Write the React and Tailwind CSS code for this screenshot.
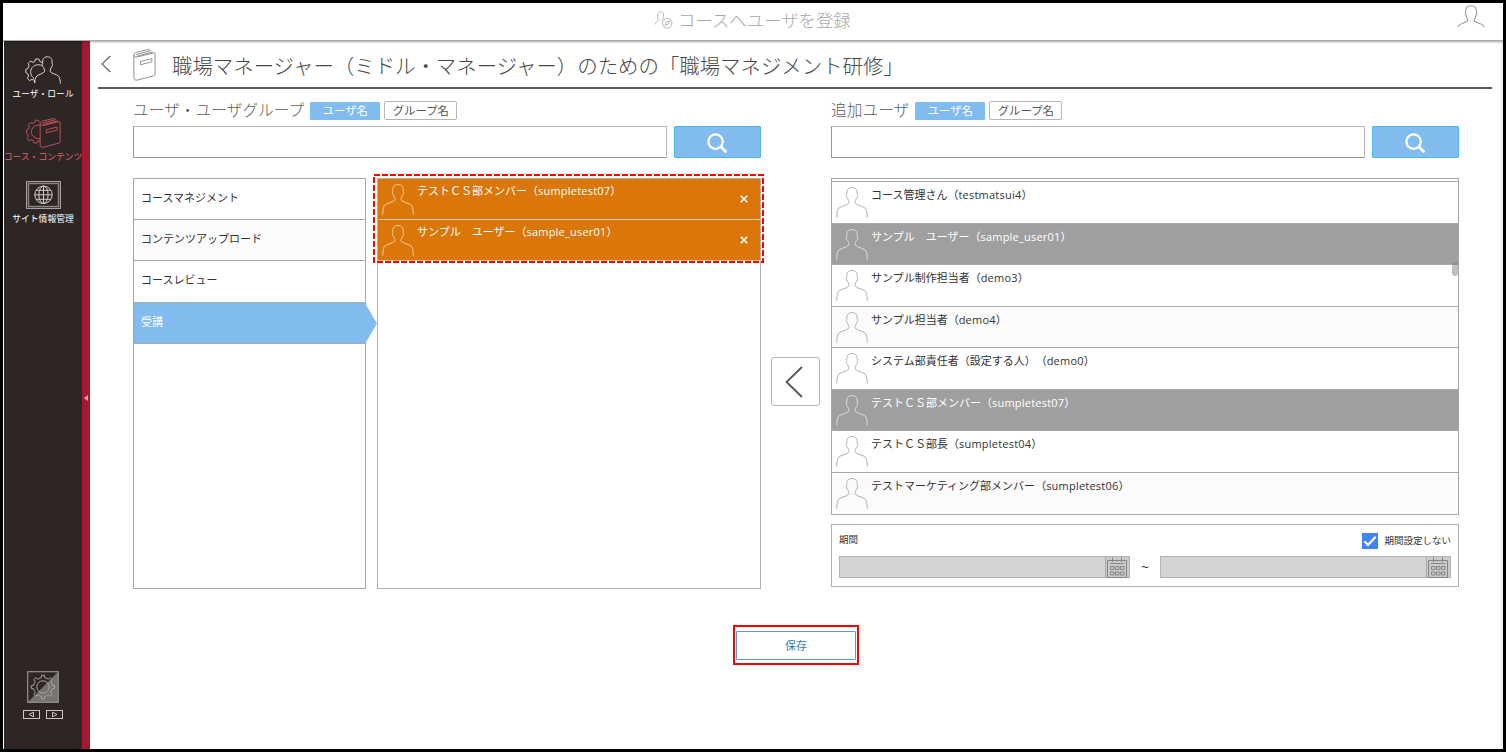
import React from "react";

const gearPath = (cx, cy, r, teeth) => {
  const step = (Math.PI * 2) / teeth;
  const p = (a, rad) => `${(cx + Math.cos(a) * rad).toFixed(2)} ${(cy + Math.sin(a) * rad).toFixed(2)}`;
  const inner = r * 0.8;
  let d = "";
  for (let i = 0; i < teeth; i++) {
    const a = i * step - Math.PI / 2;
    d += `${i ? "L" : "M"}${p(a - step * 0.24, inner)}L${p(a - step * 0.15, r)}L${p(a + step * 0.15, r)}L${p(a + step * 0.24, inner)}`;
    d += `A${inner} ${inner} 0 0 1 ${p(a + step * 0.76, inner)}`;
  }
  return d + "Z";
};

const Person = ({ className }) => (
  <svg viewBox="0 0 32 31" className={className} fill="none" stroke="currentColor" strokeWidth="1">
    <path d="M.7 30.6C.8 27 1.2 23.5 2.2 21.6C3.8 19.6 10.2 18.6 12.6 16.4C13.6 15 12.6 14.2 11.8 11.6C10.4 11 9.9 8.6 10.8 7.6C10.3 2.6 12.3.6 16 .6S21.7 2.6 21.2 7.6C22.1 8.6 21.6 11 20.2 11.6C19.4 14.2 18.4 15 19.4 16.4C21.8 18.6 28.2 19.6 29.8 21.6C30.8 23.5 31.2 27 31.3 30.6" />
  </svg>
);

const bookPaths = (
  <>
    <path d="M.8 7.2C.8 5.4 1.6 4.7 3.2 4.3L16 1.2" />
    <path d="M2.8 6.4L17.6 2.6M3.6 8L19.2 4" />
    <path d="M.8 7C1 8.6 2.4 9.2 4 8.8L20.6 4.8C21.2 4.7 21.6 5 21.6 5.6V25.6C21.6 26.4 21.2 27 20.4 27.2L4.2 31.5C2.2 31.8.8 31 .8 29.4Z" />
    <path d="M7.2 13.3L18.4 10.4V13.6L7.2 16.5Z" />
  </>
);

const BookIcon = () => (
  <svg viewBox="0 0 22.4 32.4" className="h-[33px] w-[23px]" fill="none" stroke="#888" strokeWidth="0.9">
    {bookPaths}
  </svg>
);

const RoleIcon = () => (
  <svg viewBox="0 0 36 28" className="h-7 w-9" fill="none" stroke="#d8d5d4" strokeWidth="1">
    <path d="M10 26.8L9.8 24.6L7 23.4L4.5 24.6L2.4 22.4L3.6 20L2.7 17.6L.8 16.6V13.4L3 12.4L4 9.8L3.2 7.4L5.4 5.2L7.9 6.3L9.8 5.4L10.6 3H13.8L14.8 5.4L17.4 6.6" />
    <path d="M9 22.4C5.8 20 4.8 16 6.4 12.8C8.2 9.2 13 7.6 17.2 9.6" />
    <path d="M9.4 27C9.6 24 10.4 21.4 12 20C14.4 18.2 17.6 17.8 19.4 15.8C20.2 14.6 19.2 14 18.6 11.4C17.2 10.8 16.8 8.6 17.7 7.6C17.2 2.8 19 .8 22.4.8S27.6 2.8 27.1 7.6C28 8.6 27.6 10.8 26.2 11.4C25.6 14 24.6 14.6 25.4 15.8C27.2 18 31.4 18 33.4 20C34.8 21.6 35.2 24.6 35.4 27.6" />
  </svg>
);

const CourseIcon = () => (
  <svg viewBox="0 0 35 32" className="h-8 w-[35px]" fill="none" stroke="#c4505a" strokeWidth="1">
    <path d="M14.5 24.2L12 23.8L11 26H8.2L7.2 23.6L5 22.6L3 23.8L1.2 21.6L2.4 19.4L1.8 17.2L.6 16.2V13L2.6 12L3.4 9.8L2.4 7.6L4.4 5.6L6.6 6.6L8.6 5.6L9.4 3.2H12.4L13.4 5.2" />
    <path d="M14 8.2C9 7.6 5.2 10.8 5.4 15.2C5.6 19.4 9.4 22.2 14 21.4" />
    <g transform="translate(13.4 0) scale(.96)">{bookPaths}</g>
  </svg>
);

const SiteIcon = () => (
  <svg viewBox="0 0 35 28" className="h-7 w-[35px]" fill="none" stroke="#cfcccb" strokeWidth="1">
    <rect x=".6" y=".6" width="33.8" height="26.8" stroke="#b5b1b0" />
    <rect x="2.5" y="2.5" width="30" height="23" stroke="#8a8685" strokeWidth="1.4" />
    <circle cx="17.5" cy="13.8" r="8.7" />
    <ellipse cx="17.5" cy="13.8" rx="4.6" ry="8.7" />
    <path d="M17.5 5V22.5M8.8 13.8H26.2M10 9.3H25M10 18.3H25" />
  </svg>
);

const SettingsIcon = () => (
  <svg viewBox="0 0 32 32" className="h-8 w-8" fill="none">
    <path d="M31 1V31H1Z" fill="#767271" />
    <rect x=".7" y=".7" width="30.6" height="30.6" stroke="#96928f" strokeWidth="1.2" />
    <path d={gearPath(16, 16, 11.8, 8)} stroke="#aaa6a4" strokeLinejoin="round" />
    <circle cx="16" cy="16" r="6.2" stroke="#aaa6a4" />
  </svg>
);

const ArrowBox = ({ flip }) => (
  <svg viewBox="0 0 17 9" className="h-[9px] w-[17px]" fill="none" stroke="#c9c6c4">
    <rect x=".5" y=".5" width="16" height="8" />
    <path d={flip ? "M6.5 2.2V6.8L11 4.5Z" : "M10.5 2.2V6.8L6 4.5Z"} />
  </svg>
);

const CalendarIcon = () => (
  <svg viewBox="0 0 22 21" className="h-[21px] w-[22px]" fill="none" stroke="#858585">
    <path d="M1.5 3.5H20.5V20.5H1.5ZM6.5.5V5M15.5.5V5M4 6.5H18" />
    <path d="M4.5 9.5H8V12.5H4.5ZM9.5 9.5H13V12.5H9.5ZM14.5 9.5H18V12.5H14.5ZM4.5 15H8V18H4.5ZM9.5 15H13V18H9.5ZM14.5 15H18V18H14.5Z" />
  </svg>
);

const NavItem = ({ icon, label, className }) => (
  <div className={"flex w-[78px] flex-col items-center whitespace-nowrap " + className}>
    {icon}
    <span className="text-[8.8px] leading-3">{label}</span>
  </div>
);

const SectionHead = ({ title }) => (
  <div className="flex h-[19px] items-center whitespace-nowrap">
    <h2 className="mr-[6px] text-[15.72px] leading-[19px] font-light text-[#5c5c5c]">{title}</h2>
    <button className="mr-1 h-[18px] w-[70px] rounded-[1px] bg-[#82bcef] text-[11.4px] leading-[18px] text-white">ユーザ名</button>
    <button className="h-[19px] w-[73px] rounded-[2px] border border-[#b5b5b5] text-[11.4px] leading-[17px] text-[#555]">グループ名</button>
  </div>
);

const SearchBar = () => (
  <div className="mt-[6px] flex h-8 gap-[7px]">
    <div className="w-[534px] border border-[#b8b8b8] border-b-[#999] border-l-[#999] bg-white" />
    <button className="flex w-[87px] items-center justify-center rounded-[1px] border border-[#4db8ec] bg-[#82bcef]">
      <svg viewBox="0 0 20 20" className="mt-px mr-[2px] h-5 w-5" fill="none" stroke="#fff" strokeWidth="2.3" strokeLinecap="round">
        <circle cx="8.6" cy="8.6" r="7.2" />
        <path d="M13.8 13.8L18.6 18.4" strokeWidth="2.8" />
      </svg>
    </button>
  </div>
);

const Name = ({ name, id }) => (
  <div className="text-[11px] leading-[18px] whitespace-pre [text-spacing-trim:space-all]">
    {name}（<span className="tracking-[0.22px]">{id}</span>）
  </div>
);

const categories = ["コースマネジメント", "コンテンツアップロード", "コースレビュー", "受講"];
const selected = [
  ["テストＣＳ部メンバー", "sumpletest07"],
  ["サンプル　ユーザー", "sample_user01"],
];
const users = [
  ["コース管理さん", "testmatsui4"],
  ["サンプル　ユーザー", "sample_user01", true],
  ["サンプル制作担当者", "demo3"],
  ["サンプル担当者", "demo4"],
  ["システム部責任者（設定する人）", "demo0"],
  ["テストＣＳ部メンバー", "sumpletest07", true],
  ["テストＣＳ部長", "sumpletest04"],
  ["テストマーケティング部メンバー", "sumpletest06"],
];

const DateField = () => (
  <div className="flex h-[22px] w-[291px] justify-end border border-[#b4b4b4] bg-[#d3d3d3]">
    <div className="border-l border-[#aaa] bg-[#cacaca] pr-px">
      <CalendarIcon />
    </div>
  </div>
);

export default function App() {
  return (
    <div className="flex h-[752px] w-[1506px] flex-col overflow-hidden border-[3px] border-black bg-white font-['Open_Sans','Noto_Sans_CJK_JP',sans-serif] text-[#333]">
      <header className="relative z-10 flex h-[38px] shrink-0 border-b border-[#aaa] pt-[4px] shadow-[0_1px_2px_rgba(0,0,0,0.35)]">
        <div className="ml-[651px] flex h-[26px] w-[803px] items-center text-[#a8a8a8]">
          <svg viewBox="0 0 19 18" className="mr-[5px] h-[18px] w-[19px]" fill="none" stroke="#b8b8b8" strokeWidth="1">
            <path d="M.8 13.5C1.2 10.5 4.8 10.6 5 8.6C3.6 7 3.6 5.8 3.7 4C3.8 1.8 5 .8 6.6.8S9.4 1.8 9.5 4C9.6 5.8 9.6 7 8.2 8.6L9 9.6" />
            <circle cx="13.2" cy="12.2" r="4.8" />
            <path d="M11 14.4L12 11.6L15.8 9.8L14.2 13.2Z" />
          </svg>
          <h1 className="text-[17.4px] font-light whitespace-nowrap">コースへユーザを登録</h1>
        </div>
        <svg viewBox="0 0 28 23" className="mt-[-2px] h-[23px] w-7" fill="none" stroke="#999" strokeWidth="1.1">
          <path d="M1 22C2 17.4 10 18.6 11 15.2C9.8 13.2 9.4 12 9 10.4C8.2 9.8 8 8.2 8.6 7.4C8.4 2.8 10 .8 14 .8S19.6 2.8 19.4 7.4C20 8.2 19.8 9.8 19 10.4C18.6 12 18.2 13.2 17 15.2C18 18.6 26 17.4 27 22" />
        </svg>
      </header>

      <div className="flex min-h-0 flex-1">
        <nav className="ml-px flex w-[86px] shrink-0 bg-[#2e2625]">
          <div className="flex w-[78px] flex-col items-center">
            <NavItem icon={<RoleIcon />} label="ユーザ・ロール" className="mt-[15px] gap-[4px] text-white" />
            <NavItem icon={<CourseIcon />} label="コース・コンテンツ" className="mt-[17px] gap-[2px] text-[#e0606c]" />
            <NavItem icon={<SiteIcon />} label="サイト情報管理" className="mt-[18px] gap-[4px] text-white" />
            <div className="mt-auto mb-[30px] flex flex-col items-center gap-[7px]">
              <SettingsIcon />
              <div className="flex gap-[6px]">
                <ArrowBox />
                <ArrowBox flip />
              </div>
            </div>
          </div>
          <div className="flex w-2 items-center justify-center bg-[#a21a2f] pt-[6px]">
            <svg viewBox="0 0 4 6" className="h-[6px] w-1" fill="#e6a5ae"><path d="M4 0V6L0 3Z" /></svg>
          </div>
        </nav>

        <main className="flex flex-1 flex-col">
          <div className="mr-[9px] ml-2 flex h-[48px] shrink-0 items-center border-b-2 border-[#5a5a5a] whitespace-nowrap">
            <svg viewBox="0 0 10 18" className="ml-[3px] h-[18px] w-[10px]" fill="none" stroke="#666" strokeWidth="1.2">
              <path d="M9.3 1L1 9L9.3 17" />
            </svg>
            <div className="ml-[22px]"><BookIcon /></div>
            <div className="mt-[3px] ml-[16px] text-[20.42px] leading-6 font-light text-[#484848]">
              職場マネージャー（ミドル・マネージャー）のための「職場マネジメント研修」
            </div>
          </div>

          <div className="mt-[12px] ml-[43px] flex">
            <section className="w-[628px]">
              <SectionHead title="ユーザ・ユーザグループ" />
              <SearchBar />
              <div className="mt-[20px] flex h-[411px] gap-[11px]">
                <ul className="w-[233px] border border-[#a8a8a8]">
                  {categories.map((c, i) => (
                    <li
                      key={c}
                      className={
                        "relative border-b border-[#aaa] pl-[7px] text-[11px] leading-[38px] " +
                        (i === 0 ? "h-[40.5px] bg-white" : i === 3 ? "h-[41.5px] bg-[#82bcef] text-white" : i === 1 ? "h-[41.5px] bg-[#fbfbfb]" : "h-[41.5px] bg-white")
                      }
                    >
                      {c}
                      {i === 3 && (
                        <svg viewBox="0 0 12 41" className="absolute top-0 left-full h-[41px] w-3" fill="#82bcef">
                          <path d="M0 0L12 20.5L0 41Z" />
                        </svg>
                      )}
                    </li>
                  ))}
                </ul>
                <div className="relative w-[384px] border border-[#b0b0b0]">
                  {selected.map(([n, id], i) => (
                    <div
                      key={id}
                      className={"flex border-b border-[#e8c9a0] bg-[#da7708] text-white " + (i ? "h-[41.5px]" : "h-[40.5px]")}
                    >
                      <Person className={"ml-1 h-[31px] w-8 text-[#f3cf9f] " + (i ? "mt-[5px]" : "mt-[5px]")} />
                      <div className="mt-[3px] ml-[3px] flex-1"><Name name={n} id={id} /></div>
                      <svg viewBox="0 0 8 8" className="mt-[16px] mr-[12px] h-2 w-2" stroke="#fff" strokeWidth="1.6">
                        <path d="M.7.7L7.3 7.3M7.3.7L.7 7.3" />
                      </svg>
                    </div>
                  ))}
                  <svg className="absolute top-[-5px] left-[-5px] h-[90px] w-[392px]" fill="none" stroke="#f00" strokeWidth="2">
                    <rect x="1" y="1" width="389" height="87" strokeDasharray="6 2" />
                  </svg>
                </div>
              </div>
            </section>

            <div className="flex w-[70px] items-start justify-center pt-[256px]">
              <button className="mr-[2px] flex h-[49px] w-[49px] items-center justify-center rounded-[3px] border border-[#b5b5b5]">
                <svg viewBox="0 0 18 32" className="mr-[2px] h-8 w-[18px]" fill="none" stroke="#555" strokeWidth="1.8">
                  <path d="M17 1L1.5 16L17 31" />
                </svg>
              </button>
            </div>

            <section className="w-[628px]">
              <SectionHead title="追加ユーザ" />
              <SearchBar />
              <div className="relative mt-[20px] h-[337px] border border-[#a8a8a8] pt-[2px]">
                {users.map(([n, id, on], i) => (
                  <div
                    key={n}
                    className={
                      "flex h-[41.5px] border-t border-[#aaa] " +
                      (on ? "bg-[#9f9f9f] text-white" : i % 2 ? "bg-[#fbfbfb]" : "bg-white")
                    }
                  >
                    <Person className={"mt-[5px] ml-1 h-[31px] w-8 " + (on ? "text-[#dedede]" : "text-[#b0b0b0]")} />
                    <div className="mt-[4px] ml-[3px]"><Name name={n} id={id} /></div>
                  </div>
                ))}
                <div className="absolute top-[83px] right-0 h-[14px] w-[6px] rounded-[3px] bg-[#7f7f7f]/50" />
              </div>
              <div className="mt-[9px] flex h-[63px] flex-col border border-[#b0b0b0] px-[7px]">
                <div className="mt-[7px] flex h-[18px] items-center text-[9.5px]">
                  <span className="mt-[-2px] mr-auto">期間</span>
                  <span className="mr-[6px] flex h-4 w-4 items-center justify-center bg-[#3f86f4]">
                    <svg viewBox="0 0 16 16" className="h-4 w-4" fill="none" stroke="#fff" strokeWidth="2.2">
                      <path d="M2.3 8.3L6 12L13.7 3.8" />
                    </svg>
                  </span>
                  <span>期間設定しない</span>
                </div>
                <div className="mt-[6px] flex items-center justify-between">
                  <DateField />
                  <span className="text-sm leading-4">~</span>
                  <DateField />
                </div>
              </div>
            </section>
          </div>

          <div className="mt-[36px] ml-[643px] h-10 w-[126px] border-2 border-[#f00] px-px py-[4px]">
            <button className="block h-[29px] w-[120px] rounded-[1px] border border-[#5b9bd0] text-[11px] leading-[25px] text-[#2f7fc0]">保存</button>
          </div>
        </main>
        <div className="w-[2px] bg-[#eee]" />
      </div>
    </div>
  );
}
